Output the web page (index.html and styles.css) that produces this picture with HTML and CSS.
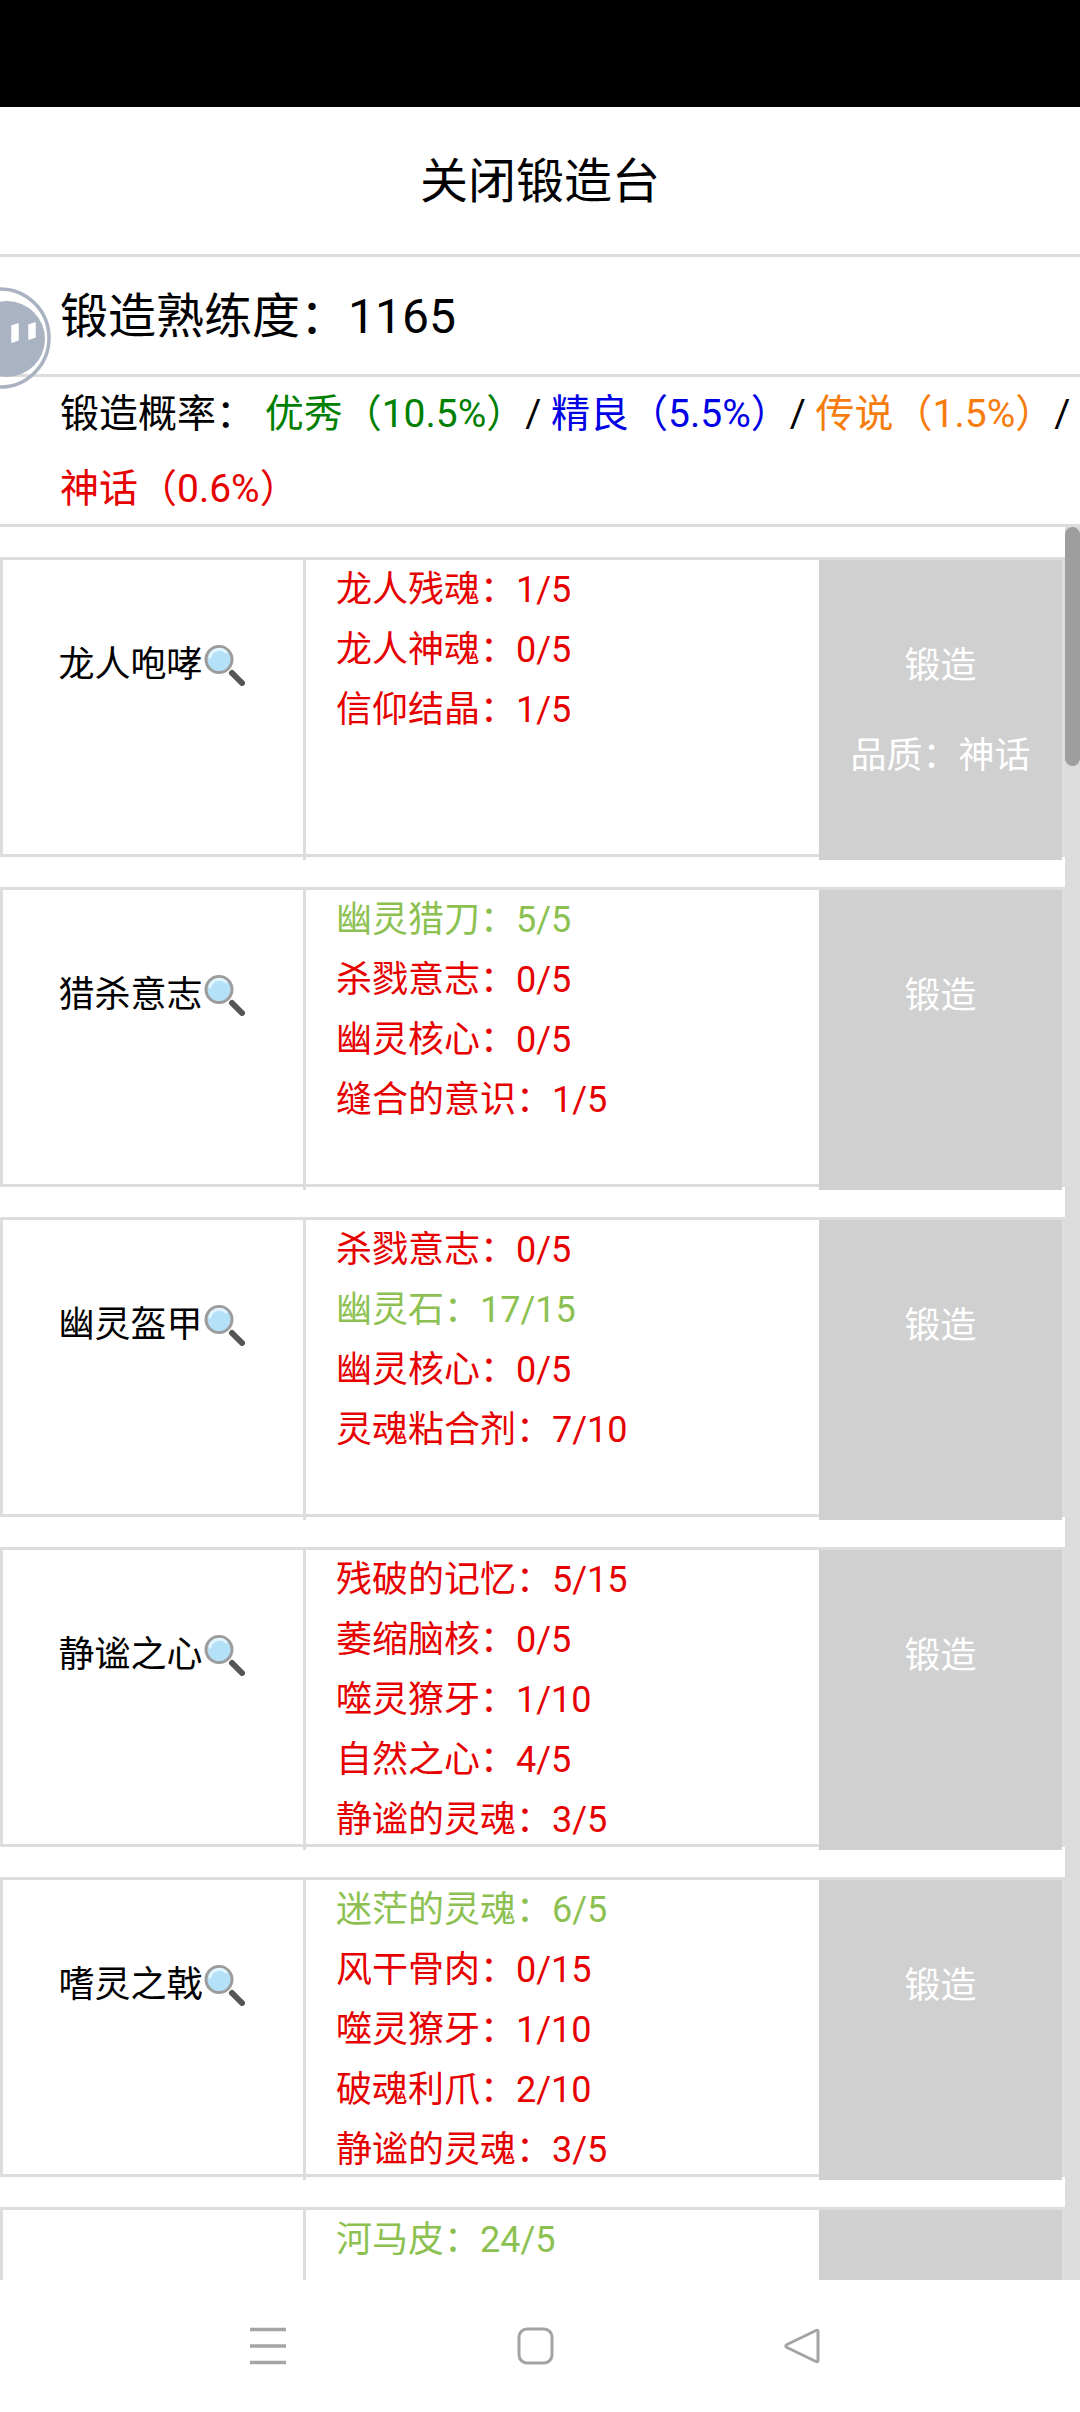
FILE: index.html
```html
<!DOCTYPE html>
<html lang="zh-CN">
<head>
<meta charset="utf-8">
<title>锻造台</title>
<link rel="stylesheet" href="styles.css">
</head>
<body>
<svg width="0" height="0" class="defs">
  <symbol id="lens" viewBox="0 0 42 42">
    <line x1="29" y1="29" x2="39" y2="39" stroke="#555" stroke-width="6" stroke-linecap="round"/>
    <circle cx="16" cy="15.500" r="13" fill="#b4e1f8" stroke="#9c9c9c" stroke-width="3"/>
    <path d="M7 13a9.500 9.500 0 0 1 16-5" fill="none" stroke="#e2f5fe" stroke-width="3" stroke-linecap="round"/>
  </symbol>
</svg>
<div class="status"></div>
<main class="app">
  <div class="close">关闭锻造台</div>
  <div class="skill">锻造熟练度：1165</div>
  <div class="rates">锻造概率： <span class="r-green">优秀（10.5%）</span>/ <span class="r-blue">精良（5.5%）</span>/ <span class="r-orange">传说（1.5%）</span>/ <span class="r-red">神话（0.6%）</span></div>
  <section class="list">
    <article class="card">
      <div class="name">龙人咆哮<svg class="lens"><use href="#lens"/></svg></div>
      <div class="mats">
        <p class="no">龙人残魂：1/5</p><p class="no">龙人神魂：0/5</p><p class="no">信仰结晶：1/5</p>
      </div>
      <div class="forge"><span>锻造</span><span>品质：神话</span></div>
    </article>
    <article class="card">
      <div class="name">猎杀意志<svg class="lens"><use href="#lens"/></svg></div>
      <div class="mats">
        <p class="ok">幽灵猎刀：5/5</p><p class="no">杀戮意志：0/5</p><p class="no">幽灵核心：0/5</p><p class="no">缝合的意识：1/5</p>
      </div>
      <div class="forge"><span>锻造</span></div>
    </article>
    <article class="card">
      <div class="name">幽灵盔甲<svg class="lens"><use href="#lens"/></svg></div>
      <div class="mats">
        <p class="no">杀戮意志：0/5</p><p class="ok">幽灵石：17/15</p><p class="no">幽灵核心：0/5</p><p class="no">灵魂粘合剂：7/10</p>
      </div>
      <div class="forge"><span>锻造</span></div>
    </article>
    <article class="card">
      <div class="name">静谧之心<svg class="lens"><use href="#lens"/></svg></div>
      <div class="mats">
        <p class="no">残破的记忆：5/15</p><p class="no">萎缩脑核：0/5</p><p class="no">噬灵獠牙：1/10</p><p class="no">自然之心：4/5</p><p class="no">静谧的灵魂：3/5</p>
      </div>
      <div class="forge"><span>锻造</span></div>
    </article>
    <article class="card">
      <div class="name">嗜灵之戟<svg class="lens"><use href="#lens"/></svg></div>
      <div class="mats">
        <p class="ok">迷茫的灵魂：6/5</p><p class="no">风干骨肉：0/15</p><p class="no">噬灵獠牙：1/10</p><p class="no">破魂利爪：2/10</p><p class="no">静谧的灵魂：3/5</p>
      </div>
      <div class="forge"><span>锻造</span></div>
    </article>
    <article class="card">
      <div class="name"></div>
      <div class="mats">
        <p class="ok">河马皮：24/5</p>
      </div>
      <div class="forge"></div>
    </article>
    <div class="scrollbar"><div class="thumb"></div></div>
  </section>
</main>
<nav class="nav">
  <svg class="nav-ic" width="38" height="38" viewBox="0 0 38 38"><path d="M1 2.500h36M1 19h36M1 35.500h36" stroke="#a4a4a4" stroke-width="3.500" fill="none"/></svg>
  <svg class="nav-ic" width="38" height="38" viewBox="0 0 38 38"><rect x="3" y="2" width="33" height="34" rx="8" fill="none" stroke="#a4a4a4" stroke-width="3"/></svg>
  <svg class="nav-ic" width="38" height="38" viewBox="0 0 38 38"><path d="M33 3.500Q35 2.500 35 5V33Q35 35.500 33 34.500L4 20.500Q1.500 19 4 17.500Z" fill="none" stroke="#a4a4a4" stroke-width="3" stroke-linejoin="round"/></svg>
</nav>
<svg class="float" width="52" height="104" viewBox="0 0 52 104">
  <circle cx="0" cy="52" r="49" fill="none" stroke="#a9b3c1" stroke-width="3.500"/>
  <circle cx="7" cy="53" r="38" fill="#a9b3c1"/>
  <path d="M12 40l6-2v16l-6 2z" fill="#fff" stroke="#fff" stroke-width="1.500" stroke-linejoin="round"/>
  <path d="M29 39l6-2v14l-6 2z" fill="#fff" stroke="#fff" stroke-width="1.500" stroke-linejoin="round"/>
</svg>
</body>
</html>
```

FILE: styles.css
```css
* { box-sizing: border-box; }
html, body { margin: 0; padding: 0; }
body {
  width: 1080px;
  height: 2412px;
  overflow: hidden;
  display: flex;
  flex-direction: column;
  position: relative;
  background: #fff;
  color: #000;
  font-family: Roboto, "Noto Sans CJK SC", sans-serif;
}
.defs { position: absolute; }
.status { height: 107px; background: #000; flex: none; }
.app { flex: 1; min-height: 0; display: flex; flex-direction: column; }
.close {
  height: 150px;
  line-height: 149px;
  border-bottom: 3px solid #ddd;
  text-align: center;
  font-size: 48px;
  flex: none;
}
.skill {
  height: 120px;
  line-height: 119px;
  border-bottom: 3px solid #ddd;
  padding-left: 60px;
  font-size: 48px;
  flex: none;
}
.rates {
  height: 150px;
  line-height: 75px;
  border-bottom: 3px solid #ddd;
  padding-left: 60px;
  font-size: 39px;
  flex: none;
}
.r-blue { color: #0000e6; }
.r-green { color: #008000; }
.r-orange { color: #f67c0e; }
.r-red { color: #e60000; }
.list {
  flex: 1;
  min-height: 0;
  overflow: hidden;
  position: relative;
  padding: 30px 15px 0 0;
  display: flex;
  flex-direction: column;
  gap: 30px;
}
.card {
  flex: none;
  height: 300px;
  border: 3px solid #ddd;
  display: flex;
  font-size: 36px;
}
.name {
  width: 300px;
  height: 300px;
  flex: none;
  padding: 60px 3px 0 0;
  line-height: 90px;
  text-align: center;
}
.lens {
  width: 42px;
  height: 42px;
  vertical-align: -9px;
}
.mats {
  width: 516px;
  height: 300px;
  flex: none;
  border-left: 3px solid #ddd;
  padding-left: 30px;
}
.mats p { margin: 0; line-height: 60px; white-space: nowrap; }
.ok { color: #8cc152; }
.no { color: #e60000; }
.forge {
  flex: 1;
  height: 300px;
  background: #d0d0d0;
  color: #fff;
  padding-top: 61px;
  line-height: 90px;
  text-align: center;
  display: flex;
  flex-direction: column;
}
.scrollbar {
  position: absolute;
  top: 0;
  right: 0;
  bottom: 0;
  width: 15px;
  background: #dcdcdc;
}
.thumb {
  height: 239px;
  background: #9e9e9e;
  border-radius: 8px;
}
.nav {
  flex: none;
  height: 132px;
  background: #fff;
  position: relative;
  display: flex;
  align-items: center;
  justify-content: center;
  gap: 229px;
  padding-right: 10px;
}
.float {
  position: absolute;
  left: 0;
  top: 286px;
}
```
